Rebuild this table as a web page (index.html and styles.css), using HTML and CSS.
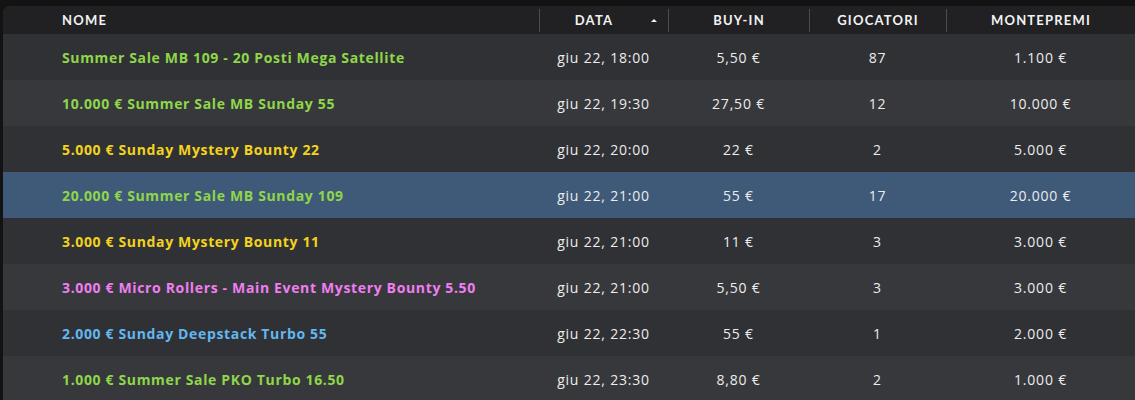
FILE: index.html
```html
<!DOCTYPE html>
<html lang="it">
<head>
<meta charset="utf-8">
<title>Tornei</title>
<link rel="stylesheet" href="styles.css">
</head>
<body>
<div class="panel">
  <div class="head">
    <div class="hcell name">NOME</div>
    <div class="hcell sorted"><span>DATA</span><i class="arrow"></i></div>
    <div class="hcell">BUY-IN</div>
    <div class="hcell">GIOCATORI</div>
    <div class="hcell">MONTEPREMI</div>
  </div>
  <div class="row">
    <div class="cell name green">Summer Sale MB 109 - 20 Posti Mega Satellite</div>
    <div class="cell">giu 22, 18:00</div><div class="cell">5,50 €</div><div class="cell">87</div><div class="cell">1.100 €</div>
  </div>
  <div class="row">
    <div class="cell name green">10.000 € Summer Sale MB Sunday 55</div>
    <div class="cell">giu 22, 19:30</div><div class="cell">27,50 €</div><div class="cell">12</div><div class="cell">10.000 €</div>
  </div>
  <div class="row">
    <div class="cell name yellow">5.000 € Sunday Mystery Bounty 22</div>
    <div class="cell">giu 22, 20:00</div><div class="cell">22 €</div><div class="cell">2</div><div class="cell">5.000 €</div>
  </div>
  <div class="row selected">
    <div class="cell name green">20.000 € Summer Sale MB Sunday 109</div>
    <div class="cell">giu 22, 21:00</div><div class="cell">55 €</div><div class="cell">17</div><div class="cell">20.000 €</div>
  </div>
  <div class="row">
    <div class="cell name yellow">3.000 € Sunday Mystery Bounty 11</div>
    <div class="cell">giu 22, 21:00</div><div class="cell">11 €</div><div class="cell">3</div><div class="cell">3.000 €</div>
  </div>
  <div class="row">
    <div class="cell name pink">3.000 € Micro Rollers - Main Event Mystery Bounty 5.50</div>
    <div class="cell">giu 22, 21:00</div><div class="cell">5,50 €</div><div class="cell">3</div><div class="cell">3.000 €</div>
  </div>
  <div class="row">
    <div class="cell name blue">2.000 € Sunday Deepstack Turbo 55</div>
    <div class="cell">giu 22, 22:30</div><div class="cell">55 €</div><div class="cell">1</div><div class="cell">2.000 €</div>
  </div>
  <div class="row">
    <div class="cell name green">1.000 € Summer Sale PKO Turbo 16.50</div>
    <div class="cell">giu 22, 23:30</div><div class="cell">8,80 €</div><div class="cell">2</div><div class="cell">1.000 €</div>
  </div>
</div>
</body>
</html>
```
FILE: styles.css
```css
html, body {
  margin: 0;
  padding: 0;
  background: #131313;
  overflow: hidden;
}
body {
  padding: 6px 0 0 3px;
  font-family: "Open Sans", "Noto Sans", sans-serif;
  color: #e6e6e6;
}
.panel {
  background: #303135;
  border-top-left-radius: 7px;
  overflow: hidden;
}
.head, .row {
  display: grid;
  grid-template-columns: 536px 129px 141px 137px 1fr;
}
.head {
  height: 28px;
  background: #212123;
  align-items: center;
}
.hcell {
  height: 23px;
  display: flex;
  align-items: center;
  justify-content: center;
  border-left: 1px solid #4c4c4e;
  font-family: "Lato", sans-serif;
  font-size: 13px;
  font-weight: 700;
  letter-spacing: 1.2px;
  color: #f2f2f2;
  position: relative;
}
.hcell.name {
  border-left: none;
  justify-content: flex-start;
  padding-left: 59px;
}
.hcell.sorted {
  padding-right: 20px;
}
.arrow {
  position: absolute;
  right: 11px;
  top: 10px;
  width: 0;
  height: 0;
  border-left: 3.5px solid transparent;
  border-right: 3.5px solid transparent;
  border-bottom: 3px solid #f2f2f2;
}
.row {
  height: 46px;
  align-items: center;
  background: #303135;
}
.row:nth-child(odd) {
  background: #37383c;
}
.row.selected {
  background: #3f5a78;
}
.cell {
  text-align: center;
  font-size: 14px;
  font-weight: 500;
  letter-spacing: 0.8px;
  color: #ececec;
}
.cell.name {
  text-align: left;
  padding-left: 59px;
  font-weight: 700;
  font-size: 14px;
  letter-spacing: 0.65px;
}
.green { color: #8fd64a; }
.yellow { color: #f3d31c; }
.pink { color: #f07ef0; }
.blue { color: #62b7f0; }
```
